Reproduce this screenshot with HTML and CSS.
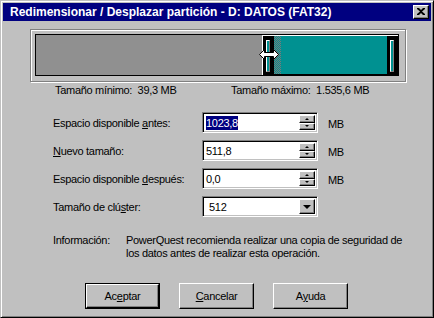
FILE: index.html
```html
<!DOCTYPE html>
<html lang="es">
<head>
<meta charset="utf-8">
<title>Redimensionar / Desplazar partición</title>
<link rel="stylesheet" href="styles.css">
</head>
<body>
<div class="window">
  <div class="titlebar">
    <span class="title">Redimensionar / Desplazar partición - D: DATOS (FAT32)</span>
    <span class="close-btn">
      <svg width="8" height="7" viewBox="0 0 8 7"><path d="M0 0h2l2 2 2-2h2v1L5 3.5 8 6v1H6L4 5 2 7H0V6l3-2.5L0 1z" fill="#000"/></svg>
    </span>
  </div>
  <div class="content">
    <div class="map-frame">
      <div class="map-inner">
        <div class="free"></div>
        <div class="part">
          <div class="edge"><div class="handle"></div></div>
          <div class="checker"></div>
          <div class="used"></div>
          <div class="edge right"><div class="handle"></div></div>
        </div>
      </div>
      <svg class="cursor" width="20" height="11" viewBox="0 0 20 11"><path d="M0.5 5.5 L5.5 0.5 V3.5 H14.5 V0.5 L19.5 5.5 L14.5 10.5 V7.5 H5.5 V10.5 Z" fill="#fff" stroke="#000" stroke-width="1"/></svg>
    </div>
    <div class="limits">
      <span class="lim-min">Tamaño mínimo:&nbsp; 39,3 MB</span>
      <span class="lim-max">Tamaño máximo:&nbsp; 1.535,6 MB</span>
    </div>
    <div class="form">
      <label class="lbl">Espacio disponible <u>a</u>ntes:</label>
      <div class="field"><span class="val"><span class="sel">1023,8</span></span><span class="spin"><span class="sbtn"><i class="up"></i></span><span class="sbtn"><i class="down"></i></span></span></div>
      <span class="unit">MB</span>

      <label class="lbl"><u>N</u>uevo tamaño:</label>
      <div class="field"><span class="val">511,8</span><span class="spin"><span class="sbtn"><i class="up"></i></span><span class="sbtn"><i class="down"></i></span></span></div>
      <span class="unit">MB</span>

      <label class="lbl">Espacio disponible <u>d</u>espués:</label>
      <div class="field"><span class="val">0,0</span><span class="spin"><span class="sbtn"><i class="up"></i></span><span class="sbtn"><i class="down"></i></span></span></div>
      <span class="unit">MB</span>

      <label class="lbl">Tamaño de clú<u>s</u>ter:</label>
      <div class="field"><span class="val combo-val">512</span><span class="drop"><i class="dtri"></i></span></div>
      <span class="unit"></span>
    </div>
    <div class="info">
      <span class="info-lbl">Información:</span>
      <p class="info-text">PowerQuest recomienda realizar una copia de seguridad de<br>los datos antes de realizar esta operación.</p>
    </div>
    <div class="buttons">
      <span class="btn default"><span class="btn-face">Ac<u>e</u>ptar</span></span>
      <span class="btn"><span class="btn-face"><u>C</u>ancelar</span></span>
      <span class="btn"><span class="btn-face">A<u>y</u>uda</span></span>
    </div>
  </div>
</div>
</body>
</html>
```

FILE: styles.css
```css
* { box-sizing: border-box; }
html, body { margin: 0; padding: 0; background: #c0c0c0; }
body {
  font-family: "Liberation Sans", Arial, sans-serif;
  font-size: 11px;
  letter-spacing: -0.3px;
  color: #000;
}
.window {
  width: 434px;
  height: 318px;
  background: #c0c0c0;
  border: 1px solid;
  border-color: #c0c0c0 #000 #000 #c0c0c0;
  box-shadow: inset 1px 1px #fff, inset -1px -1px #808080;
  padding: 2px;
  display: flex;
  flex-direction: column;
}
.titlebar {
  height: 18px;
  background: #000080;
  display: flex;
  align-items: center;
  justify-content: space-between;
  padding: 0 2px 0 7px;
}
.title {
  color: #fff;
  font-weight: bold;
  font-size: 12px;
  letter-spacing: 0;
  white-space: nowrap;
}
.close-btn {
  width: 16px;
  height: 14px;
  background: #c0c0c0;
  border: 1px solid;
  border-color: #fff #000 #000 #fff;
  box-shadow: inset -1px -1px #808080;
  display: flex;
  align-items: center;
  justify-content: center;
  padding-bottom: 1px;
}
.close-btn svg { display: block; }
.content {
  flex: 1;
  display: flex;
  flex-direction: column;
  padding: 8px 0 0 27px;
}
.map-frame {
  position: relative;
  width: 376px;
  height: 53px;
  border: 1px solid #808080;
  box-shadow: inset 1px 1px #fff, 1px 1px #fff;
  padding: 4px 6px 5px 4px;
}
.map-inner {
  height: 42px;
  border: 1px solid #000;
  display: flex;
}
.free {
  width: 226px;
  background: #909090;
}
.part {
  flex: 1;
  display: flex;
  border-top: 1px solid #fff;
  border-left: 1px solid #fff;
  background: #000;
}
.edge {
  width: 11px;
  background: #000;
  display: flex;
  align-items: center;
  padding-left: 3px;
}
.handle {
  width: 4px;
  height: 32px;
  background: #009191;
  border: 1px solid;
  border-color: #fff #808080 #808080 #fff;
}
.checker {
  width: 7px;
  margin: 0 0 1px 0;
  background-color: #009191;
  background-image:
    linear-gradient(45deg, #7a7a7a 25%, transparent 25%, transparent 75%, #7a7a7a 75%),
    linear-gradient(45deg, #7a7a7a 25%, transparent 25%, transparent 75%, #7a7a7a 75%);
  background-size: 2px 2px;
  background-position: 0 0, 1px 1px;
}
.used {
  flex: 1;
  background: #009191;
  margin-bottom: 1px;
}
.cursor {
  position: absolute;
  left: 228px;
  top: 19px;
}
.limits {
  display: flex;
  padding: 2px 0 0 25px;
  height: 30px;
}
.lim-min { width: 176px; }
.form {
  display: grid;
  grid-template-columns: 149px 116px auto;
  row-gap: 7px;
  grid-auto-rows: 21px;
  padding-left: 23px;
  align-items: center;
}
.lbl { white-space: nowrap; }
.unit { padding: 2px 0 0 10px; }
.field {
  height: 21px;
  display: flex;
  background: #fff;
  border: 1px solid;
  border-color: #808080 #fff #fff #808080;
  box-shadow: inset 1px 1px #000, inset -1px -1px #c0c0c0;
  padding: 2px;
}
.val {
  flex: 1;
  display: flex;
  align-items: center;
  padding-left: 1px;
}
.sel {
  background: #000080;
  color: #fff;
  padding: 1px 0;
}
.combo-val { padding-left: 4px; }
.spin {
  width: 16px;
  display: flex;
  flex-direction: column;
}
.sbtn {
  flex: 1;
  background: #c0c0c0;
  border: 1px solid;
  border-color: #fff #000 #000 #fff;
  box-shadow: inset -1px -1px #808080;
  display: flex;
  align-items: center;
  justify-content: center;
}
.up, .down, .dtri { display: block; width: 0; height: 0; }
.up {
  border-left: 2px solid transparent;
  border-right: 2px solid transparent;
  border-bottom: 2px solid #000;
}
.down {
  border-left: 2px solid transparent;
  border-right: 2px solid transparent;
  border-top: 2px solid #000;
}
.drop {
  width: 16px;
  background: #c0c0c0;
  border: 1px solid;
  border-color: #fff #000 #000 #fff;
  box-shadow: inset -1px -1px #808080;
  display: flex;
  align-items: center;
  justify-content: center;
}
.dtri {
  border-left: 4px solid transparent;
  border-right: 4px solid transparent;
  border-top: 4px solid #000;
}
.info {
  display: flex;
  padding: 17px 0 0 23px;
  line-height: 13px;
}
.info-lbl { width: 73px; }
.info-text { margin: 0; width: 302px; }
.buttons {
  display: flex;
  gap: 19px;
  padding: 23px 0 0 55px;
}
.btn {
  width: 75px;
  height: 26px;
  display: flex;
}
.btn-face {
  flex: 1;
  background: #c0c0c0;
  border: 1px solid;
  border-color: #fff #000 #000 #fff;
  box-shadow: inset -1px -1px #808080;
  display: flex;
  align-items: center;
  justify-content: center;
}
.btn.default { border: 1px solid #000; }
```
